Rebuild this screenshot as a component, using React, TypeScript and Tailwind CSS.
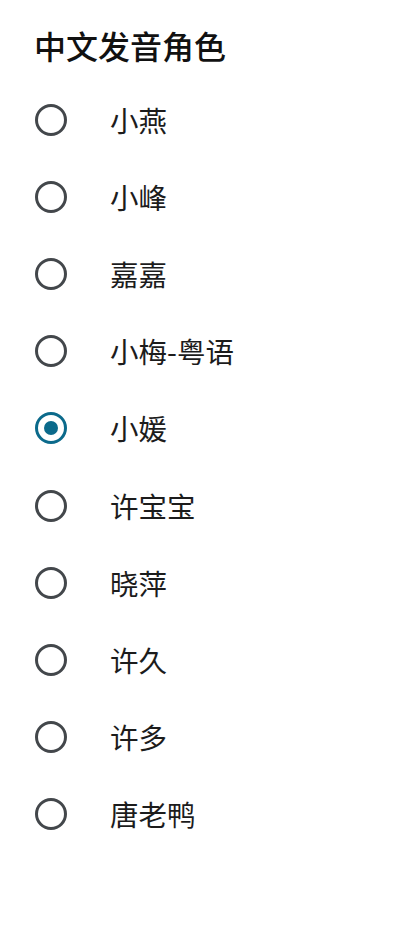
import { useState } from 'react'

const voices = ['小燕', '小峰', '嘉嘉', '小梅-粤语', '小媛', '许宝宝', '晓萍', '许久', '许多', '唐老鸭']

export default function App() {
  const [selected, setSelected] = useState('小媛')

  return (
    <div
      className="min-h-[949px] w-[400px] bg-white pl-[35px]"
      style={{ fontFamily: '"Noto Sans CJK SC", "Noto Sans", sans-serif' }}
    >
      <div className="flex h-[81px] items-start pt-[24px]">
        <h1 className="-ml-[1px] text-[32px] font-medium leading-[42px] text-[#111]">中文发音角色</h1>
      </div>
      <div className="flex flex-col">
        {voices.map((v) => {
          const on = v === selected
          return (
            <label key={v} className="flex h-[77.2px] cursor-pointer items-center" onClick={() => setSelected(v)}>
              <span
                className={
                  on
                    ? 'flex h-[32px] w-[32px] items-center justify-center rounded-full border-[3px] border-[#0b6a8b]'
                    : 'flex h-[32px] w-[32px] items-center justify-center rounded-full border-[3px] border-[#43474b]'
                }
              >
                {on && <span className="h-[14px] w-[14px] rounded-full bg-[#0b6a8b]" />}
              </span>
              <span className="ml-[43px] text-[28.5px] leading-[36px] text-[#1c1c1c]">{v}</span>
            </label>
          )
        })}
      </div>
    </div>
  )
}
